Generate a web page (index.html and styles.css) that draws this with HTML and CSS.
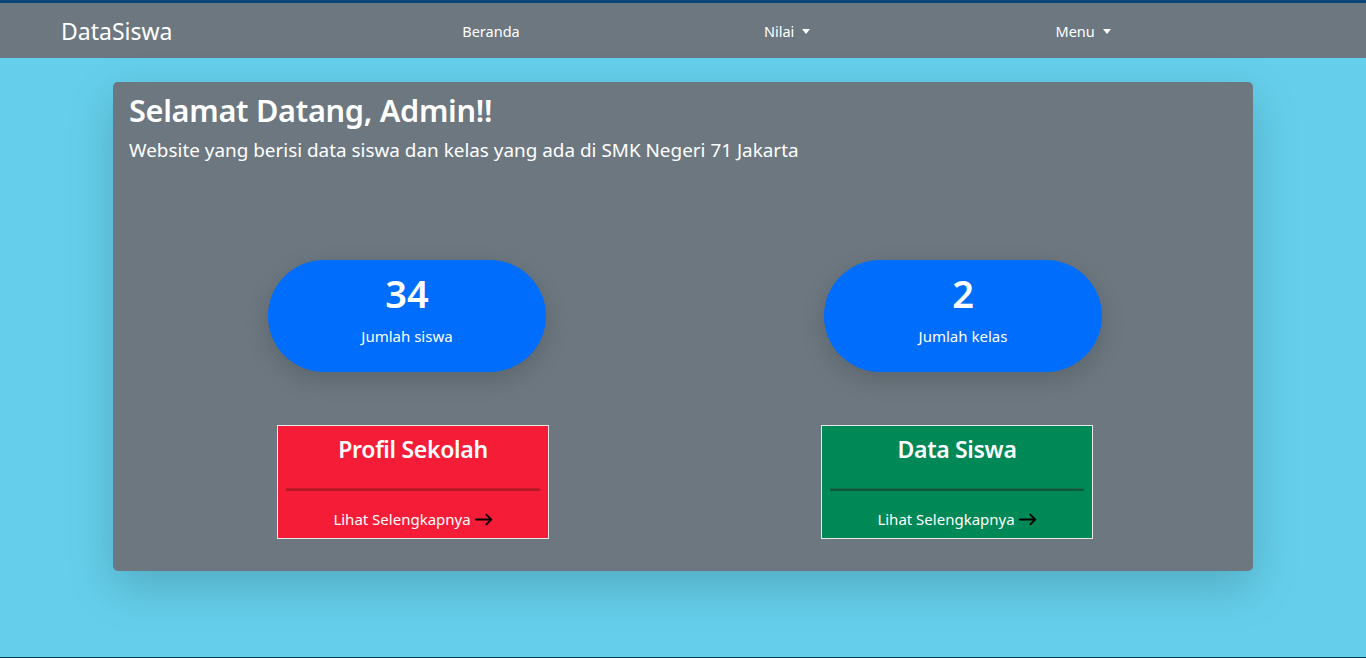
FILE: index.html
```html
<!DOCTYPE html>
<html lang="id">
<head>
<meta charset="utf-8">
<title>DataSiswa</title>
<link rel="stylesheet" href="styles.css">
</head>
<body>
<nav class="navbar">
  <a class="brand" href="#">DataSiswa</a>
  <ul class="nav">
    <li><a href="#">Beranda</a></li>
    <li><a href="#">Nilai <span class="caret"></span></a></li>
    <li><a href="#">Menu <span class="caret"></span></a></li>
  </ul>
</nav>
<main class="page">
  <section class="card">
    <h1 class="title">Selamat Datang, Admin!!</h1>
    <p class="lead">Website yang berisi data siswa dan kelas yang ada di SMK Negeri 71 Jakarta</p>
    <div class="stats">
      <div class="pill"><div class="num">34</div><div class="label">Jumlah siswa</div></div>
      <div class="pill"><div class="num">2</div><div class="label">Jumlah kelas</div></div>
    </div>
    <div class="boxes">
      <div class="box red">
        <h2>Profil Sekolah</h2>
        <hr>
        <a href="#" class="more">Lihat Selengkapnya <svg class="arrow" viewBox="0 0 16 16" width="19" height="19"><path fill="#000" fill-rule="evenodd" stroke="#000" stroke-width="0.7" d="M1 8a.5.5 0 0 1 .5-.5h11.793l-3.147-3.146a.5.5 0 0 1 .708-.708l4 4a.5.5 0 0 1 0 .708l-4 4a.5.5 0 0 1-.708-.708L13.293 8.5H1.5A.5.5 0 0 1 1 8z"/></svg></a>
      </div>
      <div class="box green">
        <h2>Data Siswa</h2>
        <hr>
        <a href="#" class="more">Lihat Selengkapnya <svg class="arrow" viewBox="0 0 16 16" width="19" height="19"><path fill="#000" fill-rule="evenodd" stroke="#000" stroke-width="0.7" d="M1 8a.5.5 0 0 1 .5-.5h11.793l-3.147-3.146a.5.5 0 0 1 .708-.708l4 4a.5.5 0 0 1 0 .708l-4 4a.5.5 0 0 1-.708-.708L13.293 8.5H1.5A.5.5 0 0 1 1 8z"/></svg></a>
      </div>
    </div>
  </section>
</main>
</body>
</html>
```

FILE: styles.css
```css
* { box-sizing: border-box; }
html, body { margin: 0; padding: 0; }
body {
  font-family: "Noto Sans", "Open Sans", sans-serif;
  background: #65cfeb;
  color: #fff;
  height: 658px;
  overflow: hidden;
  border-bottom: 1px solid #0b3a4f;
}
a { color: #fff; text-decoration: none; }

.navbar {
  height: 58px;
  background: #6c777f;
  border-top: 3px solid #0a4677;
  display: flex;
  align-items: center;
  padding-left: 61px;
}
.brand {
  font-size: 23px;
  width: 282px;
}
.nav {
  list-style: none;
  margin: 0;
  padding: 0;
  display: flex;
  width: 888px;
}
.nav li { flex: 1; text-align: center; }
.nav a { font-size: 14.5px; }
.caret {
  display: inline-block;
  width: 0; height: 0;
  margin-left: 4px;
  vertical-align: 3px;
  border-left: 4px solid transparent;
  border-right: 4px solid transparent;
  border-top: 5px solid #fff;
}

.page { padding-top: 24px; display: flex; justify-content: center; }
.card {
  width: 1140px;
  height: 489px;
  background: #6c777f;
  border-radius: 5px;
  box-shadow: 0 16px 48px rgba(0,0,0,0.18);
  padding: 8px 16px 0;
}
.title {
  margin: 0;
  font-size: 30.7px;
  font-weight: 600;
  line-height: 40px;
  letter-spacing: -0.3px;
}
.lead {
  margin: 6px 0 0;
  font-size: 18.9px;
  line-height: 28px;
}
.stats {
  display: flex;
  justify-content: center;
  gap: 278px;
  margin-top: 96px;
  padding-left: 4px;
}
.pill {
  width: 278px;
  height: 112px;
  border-radius: 56px;
  background: #006dfd;
  box-shadow: 0 8px 24px rgba(0,0,0,0.15);
  text-align: center;
  padding-top: 10px;
}
.num { font-size: 38px; font-weight: 600; line-height: 46px; }
.label { font-size: 15px; line-height: 20px; margin-top: 10px; }

.boxes {
  display: flex;
  justify-content: center;
  gap: 272px;
  margin-top: 53px;
  padding-left: 4px;
}
.box {
  width: 272px;
  height: 114px;
  border: 1px solid #e8e8e8;
  text-align: center;
  padding: 7px 8px 0;
}
.box h2 {
  margin: 0;
  font-size: 23px;
  font-weight: 600;
  line-height: 32px;
  letter-spacing: -0.3px;
}
.box hr {
  margin: 23px 0 0;
  border: 0;
  height: 3px;
}
.red { background: #f51c37; }
.red hr { background: #b31827; border-top: 1px solid #c81a2e; }
.green { background: #008856; }
.green hr { background: #0a5a3c; border-top: 1px solid #1a6a4a; }
.more {
  display: inline-flex;
  align-items: center;
  gap: 3px;
  margin-top: 18px;
  font-size: 15px;
}
.arrow { display: block; }
```
